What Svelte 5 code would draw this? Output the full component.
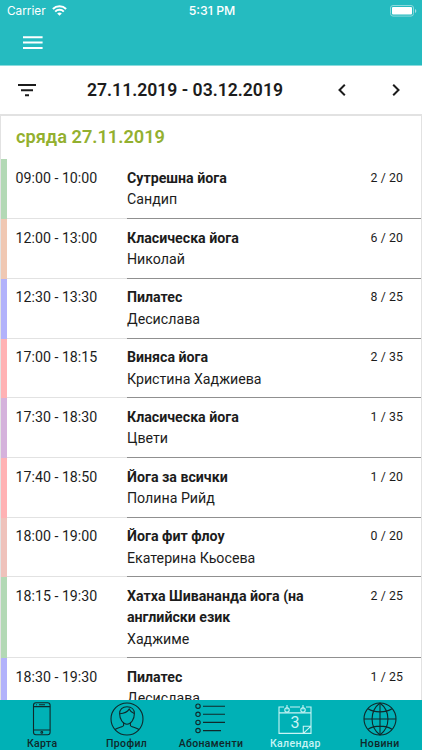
<script lang="ts">
    const day = "сряда 27.11.2019";
    const range = "27.11.2019 - 03.12.2019";

    const classes = [
        { time: "09:00 - 10:00", title: "Сутрешна йога", trainer: "Сандип", booked: "2 / 20", color: "#b3d9b5" },
        { time: "12:00 - 13:00", title: "Класическа йога", trainer: "Николай", booked: "6 / 20", color: "#f0c8b3" },
        { time: "12:30 - 13:30", title: "Пилатес", trainer: "Десислава", booked: "8 / 25", color: "#b2b2fb" },
        { time: "17:00 - 18:15", title: "Виняса йога", trainer: "Кристина Хаджиева", booked: "2 / 35", color: "#ffb2b4" },
        { time: "17:30 - 18:30", title: "Класическа йога", trainer: "Цвети", booked: "1 / 35", color: "#d5b2dc" },
        { time: "17:40 - 18:50", title: "Йога за всички", trainer: "Полина Рийд", booked: "1 / 20", color: "#ffb2b4" },
        { time: "18:00 - 19:00", title: "Йога фит флоу", trainer: "Екатерина Кьосева", booked: "0 / 20", color: "#efc2bb" },
        { time: "18:15 - 19:30", title: "Хатха Шивананда йога (на английски език", trainer: "Хаджиме", booked: "2 / 25", color: "#b3d9b5" },
        { time: "18:30 - 19:30", title: "Пилатес", trainer: "Десислава", booked: "1 / 25", color: "#b2b2fb" },
    ];

    const tabs = [
        { id: "card", label: "Карта" },
        { id: "profile", label: "Профил" },
        { id: "plans", label: "Абонаменти" },
        { id: "calendar", label: "Календар" },
        { id: "news", label: "Новини" },
    ];

    let active = $state("calendar");
</script>

<div class="app">
    <header>
        <div class="status">
            <div class="carrier">
                <span>Carrier</span>
                <svg width="15" height="11" viewBox="0 0 15 11" fill="none" stroke="#fff" stroke-width="2">
                    <path d="M.9 4a9.3 9.3 0 0 1 13.2 0M3.2 6.6a6.1 6.1 0 0 1 8.6 0" />
                    <path d="M7.5 10.8L5.2 8.6a3.2 3.2 0 0 1 4.6 0z" fill="#fff" stroke="none" />
                </svg>
            </div>
            <span class="clock">5:31 PM</span>
            <svg class="battery" width="27" height="12" viewBox="0 0 27 12">
                <rect x=".5" y=".5" width="23" height="10.6" rx="2.5" fill="none" stroke="#8bd9dc" />
                <rect x="2" y="2" width="20" height="7.6" rx="1" fill="#fff" />
                <path d="M25 4v4q1.3-.6 1.3-2T25 4z" fill="#a0e0e2" />
            </svg>
        </div>
        <button class="menu" aria-label="menu">
            <svg width="20" height="14" viewBox="0 0 20 14" stroke="#fff" stroke-width="2">
                <path d="M0 1.3h19.6M0 6.6h19.6M0 11.9h19.6" />
            </svg>
        </button>
    </header>

    <div class="toolbar">
        <button class="filter" aria-label="filter">
            <svg width="18" height="13" viewBox="0 0 18 13" stroke="#1c1c1c" stroke-width="2">
                <path d="M0 1.1h18M3 6.2h12M7 11.3h4" />
            </svg>
        </button>
        <h1>{range}</h1>
        <button class="prev" aria-label="previous week">
            <svg width="8" height="12" viewBox="0 0 8 12" fill="none" stroke="#1c1c1c" stroke-width="2">
                <path d="M6.8.7L1.5 6l5.3 5.3" />
            </svg>
        </button>
        <button class="next" aria-label="next week">
            <svg width="8" height="12" viewBox="0 0 8 12" fill="none" stroke="#1c1c1c" stroke-width="2">
                <path d="M1.2.7L6.5 6l-5.3 5.3" />
            </svg>
        </button>
    </div>

    <main>
        <h2>{day}</h2>
        {#each classes as item}
            <div class="row">
                <div class="stripe" style="background: {item.color}"></div>
                <div class="time">{item.time}</div>
                <div class="info">
                    <div class="name">
                        <strong>{item.title}</strong>
                        <span>{item.trainer}</span>
                    </div>
                    <div class="booked">{item.booked}</div>
                </div>
            </div>
        {/each}
    </main>

    <nav>
        {#each tabs as tab}
            <button class:active={active === tab.id} onclick={() => (active = tab.id)}>
                <svg width="34" height="34" viewBox="0 0 34 34" fill="none" stroke="currentColor" stroke-width="1.1">
                    {#if tab.id === "card"}
                        <rect x="8.5" y=".8" width="16.6" height="32" rx="2.5" />
                        <path d="M8.5 4.6h16.6M8.5 28h16.6M14 2.7h6M11 2.7h.8" />
                        <circle cx="16.8" cy="30.4" r=".9" />
                    {:else if tab.id === "profile"}
                        <circle cx="17" cy="17" r="16" />
                        <path d="M9.6 11.6C9.6 7.6 12.4 4.8 17 4.8s7.4 2.8 7.4 6.8c0 5.6-3.4 10.6-7.4 10.6s-7.4-5-7.4-10.6z" />
                        <path d="M9.8 11.7c4.2-.3 7.6-1.8 9.4-4.6 1 2.2 2.8 3.8 5 4.4" />
                        <path d="M13.6 20.3v3.2c0 1.2-6 2-8.6 4M20.4 20.3v3.2c0 1.2 6 2 8.6 4" />
                    {:else if tab.id === "plans"}
                        <circle cx="4" cy="4.2" r="2.2" />
                        <circle cx="4" cy="12.3" r="2.2" />
                        <circle cx="4" cy="20.4" r="2.2" />
                        <circle cx="4" cy="28.6" r="2.2" />
                        <path d="M9 4.2h22M9 12.3h22M9 20.4h22M9 28.6h18" />
                    {:else if tab.id === "calendar"}
                        <path d="M6 5H1v26.4h32V5h-5M12 5h10M1 10.9h32M25.3 31.4v-7.2H33M25.3 31.4l7.7-7.2" />
                        <circle cx="9" cy="7.9" r="2.2" />
                        <circle cx="25" cy="7.9" r="2.2" />
                        <path d="M9 3v4.6M25 3v4.6" />
                        <text x="17" y="26" text-anchor="middle">3</text>
                    {:else}
                        <circle cx="17" cy="17" r="16" />
                        <path d="M17 1v32M1 17h32M5 6.7c6.5 4.2 17.5 4.2 24 0M5 27.3c6.5-4.2 17.5-4.2 24 0" />
                        <path d="M17 1C6.4 9 6.4 25 17 33M17 1c10.6 8 10.6 24 0 32" />
                    {/if}
                </svg>
                <span>{tab.label}</span>
            </button>
        {/each}
    </nav>
</div>

<style>
    :global(body) {
        background: #fff;
    }

    .app {
        display: flex;
        flex-direction: column;
        height: 750px;
        width: 422px;
        overflow: hidden;
        font-family: Roboto, "Liberation Sans", sans-serif;
        color: #1c1c1c;
    }

    button {
        border: none;
        background: none;
        padding: 0;
        margin: 0;
        color: inherit;
        font: inherit;
        display: flex;
    }

    header {
        flex: none;
        box-sizing: border-box;
        height: 66px;
        background: #25bbc0;
        border-bottom: 1px solid #8bdbdd;
        color: #fff;
    }

    .status {
        display: grid;
        grid-template-columns: 1fr auto 1fr;
        align-items: center;
        height: 21px;
        padding: 0 5px 0 7px;
        font-family: Inter, sans-serif;
        font-size: 11.8px;
    }

    .carrier {
        display: flex;
        gap: 6px;
        align-items: center;
    }

    .carrier svg {
        margin-bottom: 1px;
    }

    .clock {
        font-size: 12.3px;
        font-weight: 500;
    }

    .battery {
        justify-self: end;
    }

    .menu {
        padding: 15px 23px 14px;
    }

    .toolbar {
        flex: none;
        display: flex;
        align-items: center;
        height: 48px;
        padding: 0 19px 0 18px;
    }

    h1 {
        margin: 0 0 0 51px;
        width: 196px;
        white-space: nowrap;
        font-size: 17.6px;
        font-weight: 600;
    }

    .prev {
        margin-left: 55px;
    }

    .next {
        margin-left: auto;
        padding-right: 3px;
    }

    main {
        flex: 1;
        min-height: 0;
        overflow: hidden;
        border: 1px solid #e2e2e2;
        border-top-width: 2px;
        border-bottom: none;
    }

    h2 {
        margin: 0;
        padding-left: 15px;
        height: 43.4px;
        line-height: 42px;
        font-size: 18.2px;
        font-weight: 600;
        color: #93b02f;
    }

    .row {
        display: flex;
        font-size: 14.2px;
        line-height: 21.4px;
    }

    .stripe {
        flex: none;
        width: 6px;
    }

    .time {
        flex: none;
        box-sizing: border-box;
        width: 120px;
        padding: 8.6px 0 0 8.6px;
        border-bottom: 1px solid #e2e2e2;
    }

    .info {
        flex: 1;
        display: flex;
        justify-content: space-between;
        padding: 8.6px 18px 7.3px 0;
        border-bottom: 1px solid #909090;
    }

    .name {
        width: 200px;
    }

    .name strong,
    .name span {
        display: block;
    }

    .booked {
        font-size: 12.3px;
        letter-spacing: .1px;
    }

    nav {
        flex: none;
        display: grid;
        grid-template-columns: repeat(5, 1fr);
        height: 50.5px;
        background: #00b1b6;
        color: #10282a;
    }

    nav button {
        flex-direction: column;
        align-items: center;
        padding-top: 2.5px;
    }

    nav button span {
        font-size: 10.5px;
        line-height: 15px;
        font-weight: 500;
        letter-spacing: .35px;
    }

    nav .active {
        color: #c9f4f5;
    }

    nav text {
        font-size: 16px;
        font-weight: 400;
        fill: currentColor;
        stroke: none;
    }
</style>
